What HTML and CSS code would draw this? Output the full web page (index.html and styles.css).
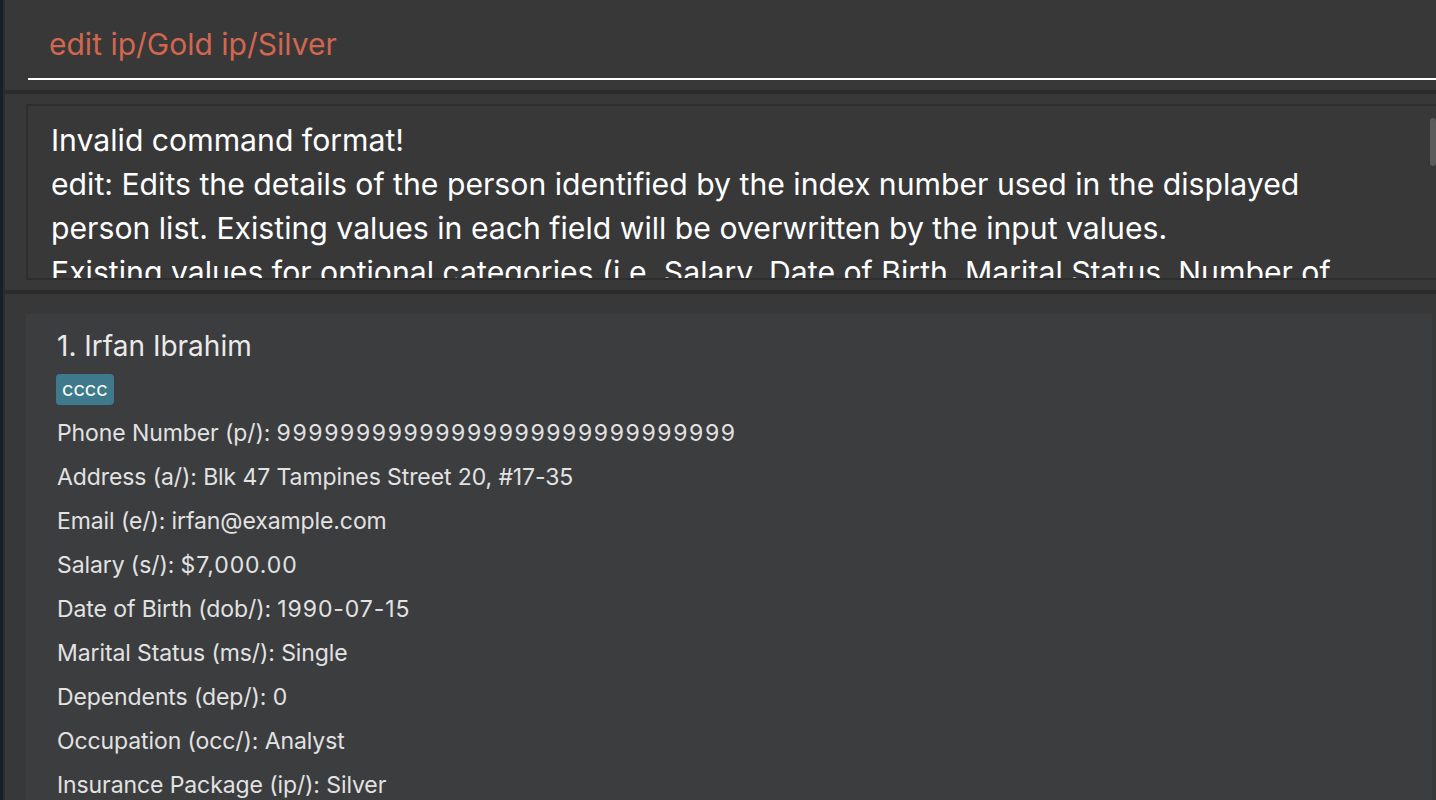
FILE: index.html
```html
<!DOCTYPE html>
<html>
<head>
<meta charset="utf-8">
<link rel="stylesheet" href="styles.css">
</head>
<body>
<div class="app">
  <div class="edge"></div>
  <div class="edge-line"></div>
  <main class="main">
    <section class="command">
      <div class="command-input">edit ip/Gold ip/Silver</div>
    </section>
    <div class="band"></div>
    <section class="result">
      <div class="result-box">
        <div class="result-text">
          <div class="line">Invalid command format!</div>
          <div class="line">edit: Edits the details of the person identified by the index number used in the displayed</div>
          <div class="line">person list. Existing values in each field will be overwritten by the input values.</div>
          <div class="line">Existing values for optional categories (i.e. Salary, Date of Birth, Marital Status, Number of</div>
        </div>
        <div class="scroll-thumb"></div>
      </div>
    </section>
    <div class="band"></div>
    <section class="list">
      <article class="card">
        <div class="name">1. Irfan Ibrahim</div>
        <div class="tags"><span class="tag">cccc</span></div>
        <div class="field">Phone Number (p/): <span class="num">99999999999999999999999999999</span></div>
        <div class="field">Address (a/): Blk 47 Tampines Street 20, #17-35</div>
        <div class="field">Email (e/): irfan@example.com</div>
        <div class="field">Salary (s/): <span class="num-sm">$7,000.00</span></div>
        <div class="field">Date of Birth (dob/): <span class="num-sm">1990-07-15</span></div>
        <div class="field">Marital Status (ms/): Single</div>
        <div class="field">Dependents (dep/): 0</div>
        <div class="field">Occupation (occ/): Analyst</div>
        <div class="field">Insurance Package (ip/): Silver</div>
      </article>
    </section>
  </main>
</div>
</body>
</html>
```

FILE: styles.css
```css
html, body {
  margin: 0;
  padding: 0;
  height: 100%;
  overflow: hidden;
  background: #383838;
  font-family: Inter, "Liberation Sans", sans-serif;
}

.app {
  display: flex;
  height: 800px;
}

.edge {
  width: 3px;
  flex: none;
  background: #15202a;
}

.edge-line {
  width: 2px;
  flex: none;
  background: #2c2c2c;
}

.main {
  flex: 1;
  display: flex;
  flex-direction: column;
  min-width: 0;
  overflow: hidden;
}

.command {
  height: 90px;
  flex: none;
  padding-left: 23px;
  box-sizing: border-box;
}

.command-input {
  box-sizing: border-box;
  border-bottom: 2px solid #ffffff;
  height: 80px;
  padding-left: 21px;
  padding-top: 27px;
  font-size: 30px;
  line-height: 34px;
  color: #d2664f;
}

.band {
  height: 4px;
  flex: none;
  background: #2b2b2b;
}

.result {
  height: 196px;
  flex: none;
  padding: 10px 0 0 21px;
  box-sizing: border-box;
}

.result-box {
  position: relative;
  height: 176px;
  margin-right: -20px;
  box-sizing: border-box;
  border: 2px solid #2e2e2e;
  overflow: hidden;
}

.result-text {
  padding: 12px 0 0 23px;
  color: #ffffff;
  font-size: 30.2px;
  line-height: 44px;
  white-space: nowrap;
}

.scroll-thumb {
  position: absolute;
  top: 12px;
  right: 18px;
  width: 6px;
  height: 48px;
  border-radius: 4px;
  background: #5b5b5b;
}

.list {
  flex: 1;
  padding: 20px 4px 0 21px;
  box-sizing: border-box;
}

.card {
  background: #3c3d3f;
  padding: 14px 31px 0;
  height: 600px;
  box-sizing: border-box;
}

.name {
  font-size: 28px;
  line-height: 36px;
  color: #eaeaea;
}

.tags {
  display: flex;
  margin-top: 10px;
  margin-left: -1px;
  margin-bottom: 6px;
}

.tag {
  background: #3e7a8c;
  color: #ffffff;
  font-size: 20px;
  line-height: 31px;
  padding: 0 6px;
  border-radius: 4px;
}

.field {
  font-size: 23px;
  line-height: 44px;
  color: #e2e2e2;
  white-space: nowrap;
  letter-spacing: -0.1px;
}

.num {
  letter-spacing: 1.6px;
}

.num-sm {
  letter-spacing: 0.9px;
}
```
